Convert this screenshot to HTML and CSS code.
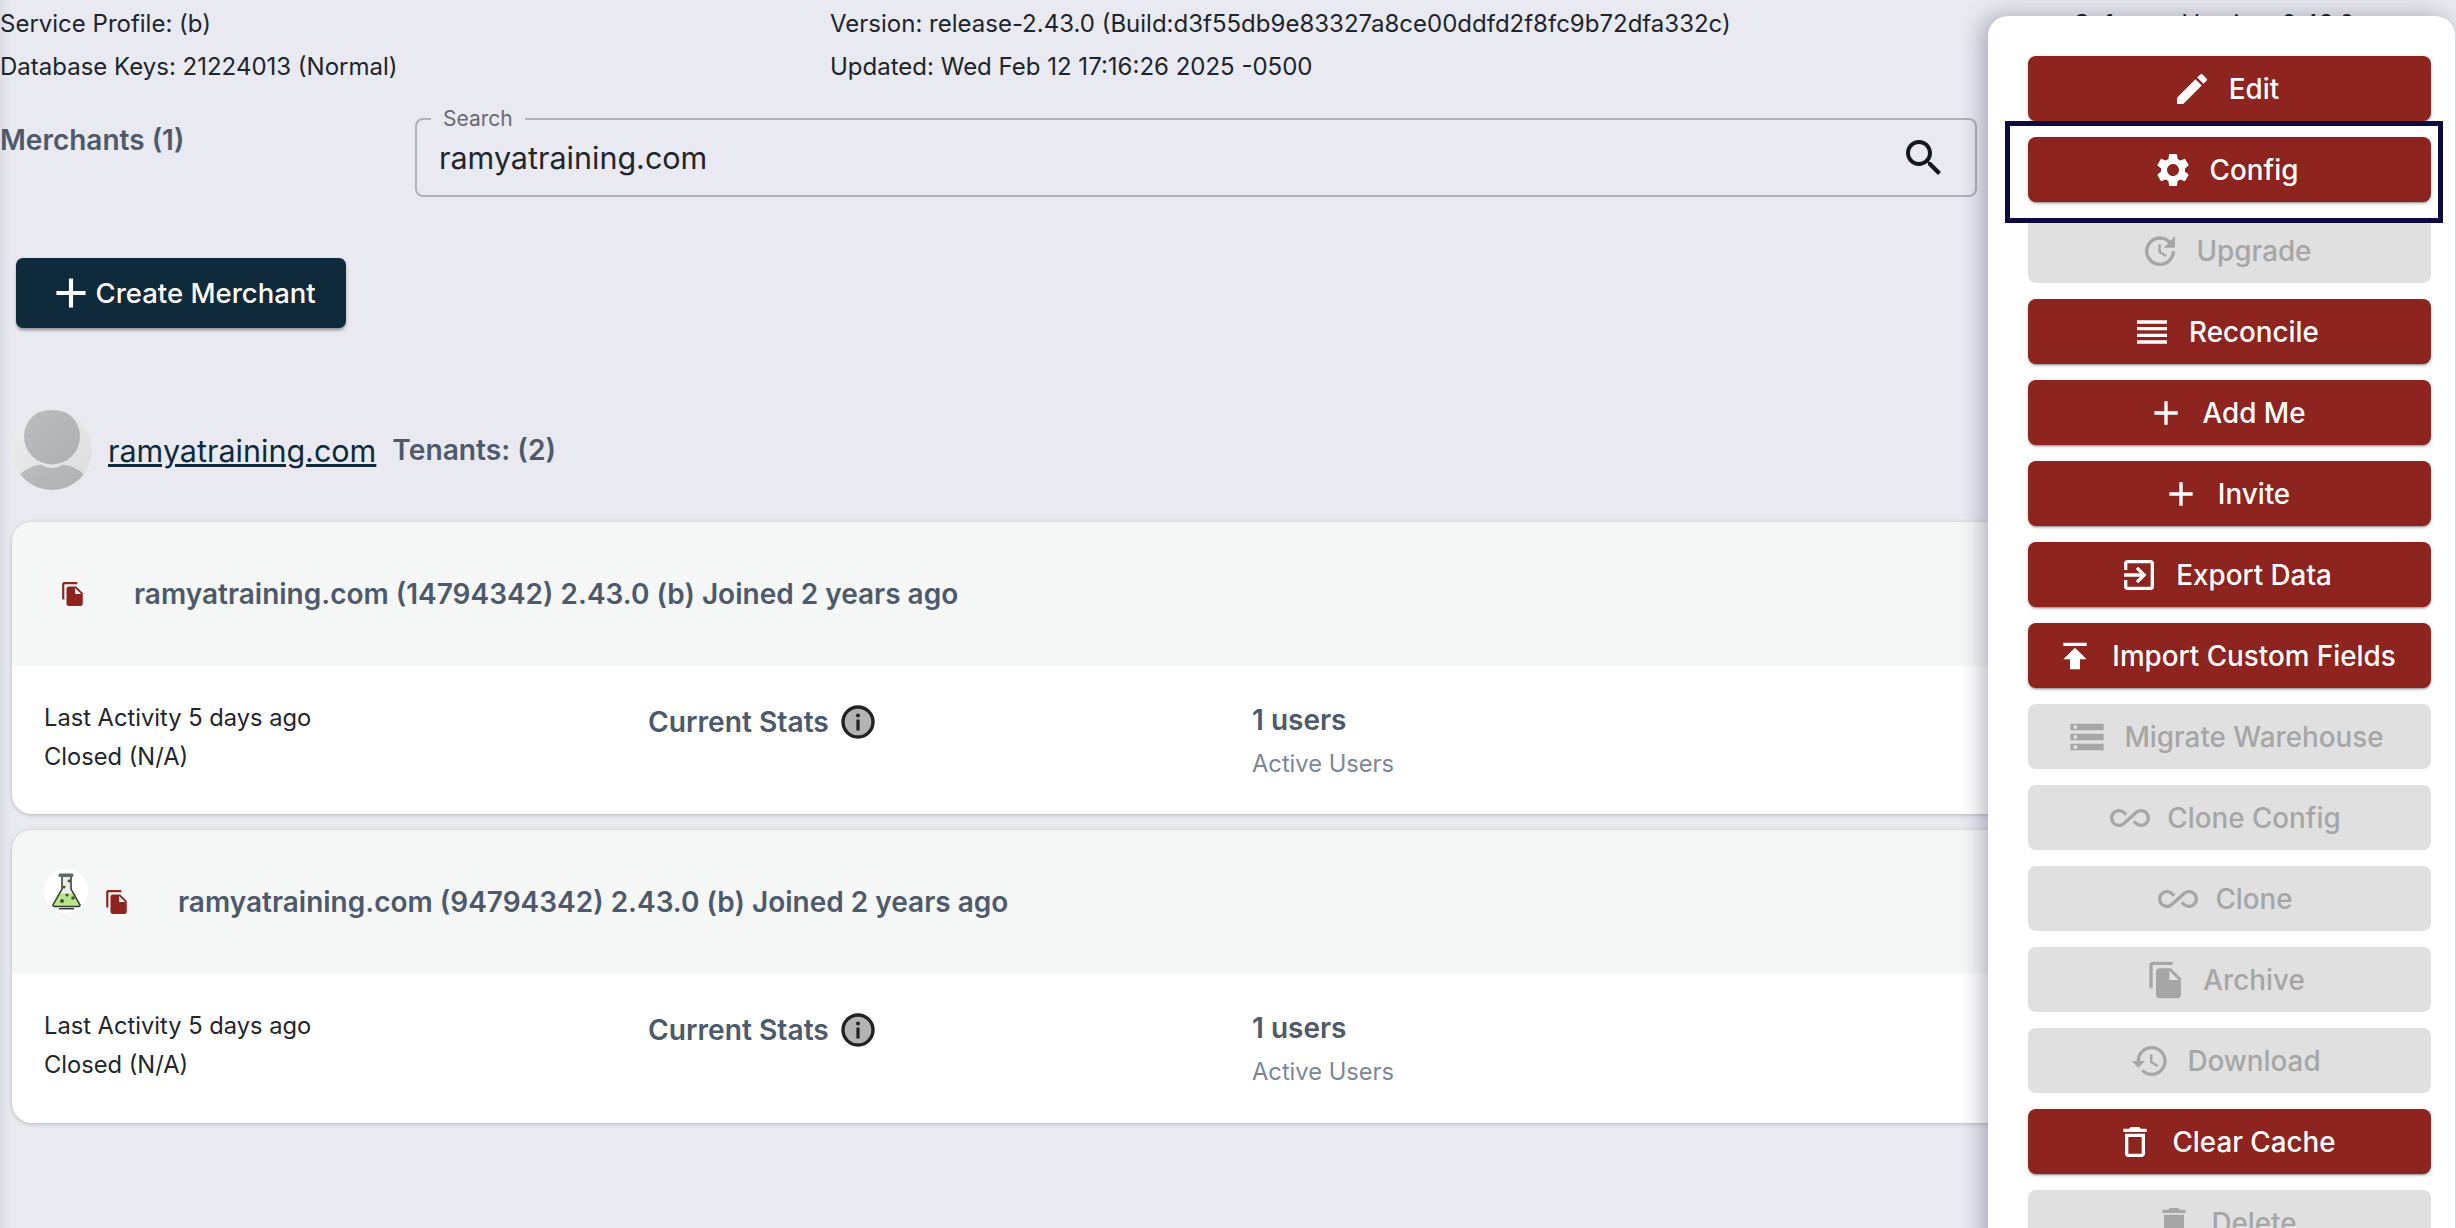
FILE: index.html
```html
<!DOCTYPE html>
<html lang="en">
<head>
<meta charset="utf-8">
<title>Merchants</title>
<link rel="stylesheet" href="styles.css">
</head>
<body>
<svg class="defs" width="0" height="0" aria-hidden="true">
  <symbol id="i-edit" viewBox="0 0 24 24"><path d="M3 17.25V21h3.75L17.81 9.94l-3.75-3.75L3 17.25zM20.71 7.04c.39-.39.39-1.02 0-1.41l-2.34-2.34a.9959.9959 0 0 0-1.41 0l-1.83 1.83 3.75 3.75 1.83-1.83z"/></symbol>
  <symbol id="i-gear" viewBox="0 0 24 24"><path d="M19.14 12.94c.04-.3.06-.61.06-.94 0-.32-.02-.64-.07-.94l2.03-1.58c.18-.14.23-.41.12-.61l-1.92-3.32c-.12-.22-.37-.29-.59-.22l-2.39.96c-.5-.38-1.03-.7-1.62-.94l-.36-2.54c-.04-.24-.24-.41-.48-.41h-3.84c-.24 0-.43.17-.47.41l-.36 2.54c-.59.24-1.13.57-1.62.94l-2.39-.96c-.22-.08-.47 0-.59.22L2.74 8.87c-.12.21-.08.47.12.61l2.03 1.58c-.05.3-.09.63-.09.94s.02.64.07.94l-2.03 1.58c-.18.14-.23.41-.12.61l1.92 3.32c.12.22.37.29.59.22l2.39-.96c.5.38 1.03.7 1.62.94l.36 2.54c.05.24.24.41.48.41h3.84c.24 0 .44-.17.47-.41l.36-2.54c.59-.24 1.13-.56 1.62-.94l2.39.96c.22.08.47 0 .59-.22l1.92-3.32c.12-.22.07-.47-.12-.61l-2.01-1.58zM12 15.6c-1.98 0-3.6-1.62-3.6-3.6s1.62-3.6 3.6-3.6 3.6 1.62 3.6 3.6-1.62 3.6-3.6 3.6z"/></symbol>
  <symbol id="i-update" viewBox="0 0 24 24"><path d="M21 10.12h-6.78l2.74-2.82c-2.73-2.7-7.15-2.8-9.88-.1-2.73 2.71-2.73 7.08 0 9.79s7.15 2.71 9.88 0C18.32 15.65 19 14.08 19 12.1h2c0 1.98-.88 4.55-2.64 6.29-3.51 3.48-9.21 3.48-12.72 0-3.5-3.47-3.53-9.11-.02-12.58s9.14-3.47 12.65 0L21 3v7.12zM12.5 8v4.25l3.5 2.08-.72 1.21L11 13V8h1.5z"/></symbol>
  <symbol id="i-reorder" viewBox="0 0 24 24"><path d="M3 15h18v-2H3v2zm0 4h18v-2H3v2zm0-8h18V9H3v2zm0-6v2h18V5H3z"/></symbol>
  <symbol id="i-add" viewBox="0 0 24 24"><path d="M19 13h-6v6h-2v-6H5v-2h6V5h2v6h6v2z"/></symbol>
  <symbol id="i-exit" viewBox="0 0 24 24"><path d="M10.09 15.59L11.5 17l5-5-5-5-1.41 1.41L12.67 11H3v2h9.67l-2.58 2.59zM19 3H5c-1.11 0-2 .9-2 2v4h2V5h14v14H5v-4H3v4c0 1.1.89 2 2 2h14c1.1 0 2-.9 2-2V5c0-1.1-.9-2-2-2z"/></symbol>
  <symbol id="i-publish" viewBox="0 0 24 24"><path d="M5 4v2h14V4H5zm0 10h4v6h6v-6h4l-7-7-7 7z"/></symbol>
  <symbol id="i-storage" viewBox="0 0 24 24"><path d="M2 20h20v-4H2v4zm2-3h2v2H4v-2zM2 4v4h20V4H2zm4 3H4V5h2v2zm-4 7h20v-4H2v4zm2-3h2v2H4v-2z"/></symbol>
  <symbol id="i-infinity" viewBox="0 0 24 24"><path d="M18.6 6.62c-1.44 0-2.8.56-3.77 1.53L12 10.66 10.48 12h.01L7.8 14.39c-.64.64-1.49.99-2.4.99-1.87 0-3.39-1.51-3.39-3.38S3.53 8.62 5.4 8.62c.91 0 1.76.35 2.44 1.03l1.13 1 1.51-1.34L9.22 8.2C8.2 7.18 6.84 6.62 5.4 6.62 2.42 6.62 0 9.04 0 12s2.42 5.38 5.4 5.38c1.44 0 2.8-.56 3.77-1.53l2.83-2.5.01.01L13.52 12h-.01l2.69-2.39c.64-.64 1.49-.99 2.4-.99 1.87 0 3.39 1.51 3.39 3.38s-1.52 3.38-3.39 3.38c-.9 0-1.76-.35-2.44-1.03l-1.14-1.01-1.51 1.34 1.27 1.12c1.02 1.01 2.37 1.57 3.82 1.57 2.98 0 5.4-2.41 5.4-5.38s-2.42-5.37-5.4-5.37z"/></symbol>
  <symbol id="i-copy" viewBox="0 0 24 24"><path d="M16 1H4c-1.1 0-2 .9-2 2v14h2V3h12V1zm-1 4l6 6v10c0 1.1-.9 2-2 2H7.99C6.89 23 6 22.1 6 21l.01-14c0-1.1.89-2 1.99-2h7zm-1 7h5.5L14 6.5V12z"/></symbol>
  <symbol id="i-history" viewBox="0 0 24 24"><path d="M13 3c-4.97 0-9 4.03-9 9H1l3.89 3.89.07.14L9 12H6c0-3.87 3.13-7 7-7s7 3.13 7 7-3.13 7-7 7c-1.93 0-3.68-.79-4.94-2.06l-1.42 1.42C8.27 19.99 10.51 21 13 21c4.97 0 9-4.03 9-9s-4.03-9-9-9zm-1 5v5l4.28 2.54.72-1.21-3.5-2.08V8H12z"/></symbol>
  <symbol id="i-trash-o" viewBox="0 0 24 24"><path d="M6 19c0 1.1.9 2 2 2h8c1.1 0 2-.9 2-2V7H6v12zM8 9h8v10H8V9zm7.5-5l-1-1h-5l-1 1H5v2h14V4z"/></symbol>
  <symbol id="i-trash" viewBox="0 0 24 24"><path d="M6 19c0 1.1.9 2 2 2h8c1.1 0 2-.9 2-2V7H6v12zM19 4h-3.5l-1-1h-5l-1 1H5v2h14V4z"/></symbol>
  <symbol id="i-search" viewBox="0 0 24 24"><path d="M15.5 14h-.79l-.28-.27C15.41 12.59 16 11.11 16 9.5 16 5.91 13.09 3 9.5 3S3 5.91 3 9.5 5.91 16 9.5 16c1.61 0 3.09-.59 4.23-1.57l.27.28v.79l5 4.99L20.49 19l-4.99-5zm-6 0C7.01 14 5 11.99 5 9.5S7.01 5 9.5 5 14 7.01 14 9.5 11.99 14 9.5 14z"/></symbol>
  <symbol id="i-info" viewBox="0 0 34 34">
    <circle cx="17" cy="17" r="15" fill="#b3b3b3" stroke="#222" stroke-width="3.4"/>
    <circle cx="17" cy="10.5" r="2" fill="#222"/>
    <rect x="15.4" y="14.5" width="3.2" height="11" fill="#222"/>
  </symbol>
</svg>

<main class="page">
  <header class="meta">
    <div class="meta-col meta-a">
      <div>Service Profile: (b)</div>
      <div>Database Keys: 21224013 (Normal)</div>
    </div>
    <div class="meta-col meta-b">
      <div>Version: release-2.43.0 (Build:d3f55db9e83327a8ce00ddfd2f8fc9b72dfa332c)</div>
      <div>Updated: Wed Feb 12 17:16:26 2025 -0500</div>
    </div>
    <div class="meta-col meta-c">
      <div>Software Version: 2.43.0</div>
    </div>
  </header>

  <section class="toolbar">
    <h2 class="count">Merchants (1)</h2>
    <div class="search">
      <span class="search-label">Search</span>
      <span class="search-value">ramyatraining.com</span>
      <svg class="search-icon"><use href="#i-search"/></svg>
    </div>
  </section>

  <button class="create"><svg class="create-icon"><use href="#i-add"/></svg>Create Merchant</button>

  <section class="merchant">
    <svg class="avatar" viewBox="0 0 80 80" aria-hidden="true">
      <defs>
        <linearGradient id="av-bg" x1="0" y1="0" x2="1" y2="1"><stop offset="0" stop-color="#eeeeef"/><stop offset="1" stop-color="#dcdcde"/></linearGradient>
        <linearGradient id="av-fg" x1="0" y1="0" x2="1" y2="1"><stop offset="0" stop-color="#bcbdc0"/><stop offset="1" stop-color="#aeafb2"/></linearGradient>
        <clipPath id="av-clip"><circle cx="40" cy="40" r="40"/></clipPath>
      </defs>
      <circle cx="40" cy="40" r="40" fill="url(#av-bg)"/>
      <g clip-path="url(#av-clip)" fill="url(#av-fg)">
        <circle cx="40" cy="26.5" r="28"/>
        <path d="M6 66 C16 57 26 54 30 55 C36 59 44 59 50 55 C54 54 64 57 74 66 L72 80 L8 80 Z"/>
      </g>
    </svg>
    <a class="merchant-link" href="#">ramyatraining.com</a>
    <span class="tenants">Tenants: (2)</span>
  </section>

  <article class="card">
    <div class="card-head">
      <svg class="doc"><use href="#i-copy"/></svg>
      <span class="card-title">ramyatraining.com (14794342) 2.43.0 (b) Joined 2 years ago</span>
    </div>
    <div class="card-body">
      <div class="activity">
        <div>Last Activity 5 days ago</div>
        <div>Closed (N/A)</div>
      </div>
      <div class="stats">Current Stats <svg class="info"><use href="#i-info"/></svg></div>
      <div class="users">
        <div class="users-num">1 users</div>
        <div class="users-label">Active Users</div>
      </div>
    </div>
  </article>

  <article class="card card-tall">
    <div class="card-head card-head-sandbox">
      <svg class="flask" viewBox="0 0 44 44" aria-hidden="true">
        <circle cx="22" cy="22" r="22" fill="#fff"/>
        <path d="M18 8 V20 L9 36 Q9 37.5 11 37.5 H34 Q36 37.5 36 36 L27 20 V8 Z" fill="#ececec"/>
        <path d="M14 24.5 H31 L35.5 36.5 Q35.5 37.5 34 37.5 H11 Q9.5 37.5 9.5 36 Z" fill="#b9e58a"/>
        <path d="M18 8 V20 L9 36 Q9 37.5 11 37.5 H34 Q36 37.5 36 36 L27 20 V8" fill="none" stroke="#333" stroke-width="1.5"/>
        <rect x="14.5" y="4.5" width="15" height="3.5" rx="1.5" fill="#666"/>
        <rect x="15" y="39" width="15" height="1.4" fill="#333"/>
        <circle cx="20" cy="18" r="1.5" fill="#3c5a20"/><circle cx="25" cy="12" r="1.4" fill="#3c5a20"/>
        <circle cx="23" cy="26" r="1.6" fill="#3c5a20"/><circle cx="29" cy="29" r="1.8" fill="#3c5a20"/><circle cx="18" cy="32" r="2" fill="#3c5a20"/>
      </svg>
      <svg class="doc"><use href="#i-copy"/></svg>
      <span class="card-title">ramyatraining.com (94794342) 2.43.0 (b) Joined 2 years ago</span>
    </div>
    <div class="card-body">
      <div class="activity">
        <div>Last Activity 5 days ago</div>
        <div>Closed (N/A)</div>
      </div>
      <div class="stats">Current Stats <svg class="info"><use href="#i-info"/></svg></div>
      <div class="users">
        <div class="users-num">1 users</div>
        <div class="users-label">Active Users</div>
      </div>
    </div>
  </article>
</main>

<aside class="menu">
  <button class="act"><span class="act-icon"><svg><use href="#i-edit"/></svg></span>Edit</button>
  <button class="act"><span class="act-icon"><svg><use href="#i-gear"/></svg></span>Config</button>
  <button class="act off"><span class="act-icon"><svg><use href="#i-update"/></svg></span>Upgrade</button>
  <button class="act"><span class="act-icon"><svg><use href="#i-reorder"/></svg></span>Reconcile</button>
  <button class="act"><span class="act-icon"><svg><use href="#i-add"/></svg></span>Add Me</button>
  <button class="act"><span class="act-icon"><svg><use href="#i-add"/></svg></span>Invite</button>
  <button class="act"><span class="act-icon"><svg><use href="#i-exit"/></svg></span>Export Data</button>
  <button class="act"><span class="act-icon"><svg><use href="#i-publish"/></svg></span>Import Custom Fields</button>
  <button class="act off"><span class="act-icon"><svg><use href="#i-storage"/></svg></span>Migrate Warehouse</button>
  <button class="act off"><span class="act-icon"><svg><use href="#i-infinity"/></svg></span>Clone Config</button>
  <button class="act off"><span class="act-icon"><svg><use href="#i-infinity"/></svg></span>Clone</button>
  <button class="act off"><span class="act-icon"><svg><use href="#i-copy"/></svg></span>Archive</button>
  <button class="act off"><span class="act-icon"><svg><use href="#i-history"/></svg></span>Download</button>
  <button class="act"><span class="act-icon"><svg><use href="#i-trash-o"/></svg></span>Clear Cache</button>
  <button class="act off"><span class="act-icon"><svg><use href="#i-trash"/></svg></span>Delete</button>
</aside>
<div class="focus-box"></div>
</body>
</html>
```

FILE: styles.css
```css
* { box-sizing: border-box; }

html, body {
  margin: 0;
  height: 100%;
  overflow: hidden;
}

body {
  position: relative;
  background: #e9e9f2;
  color: #1f2328;
  font-family: Inter, "Noto Sans", sans-serif;
}

.defs { position: absolute; }

.page {
  height: 100%;
  padding: 2px 12px 0 0;
  box-shadow: inset 14px 0 10px -10px rgba(0, 0, 0, .07);
}

/* header meta */
.meta {
  display: grid;
  grid-template-columns: 830px 1244px 1fr;
  font-size: 24px;
  line-height: 43px;
  color: #20242a;
}

/* toolbar */
.toolbar {
  display: flex;
  margin-top: 30px;
}

.count {
  width: 415px;
  flex: none;
  margin: 0;
  font-size: 28px;
  font-weight: 600;
  line-height: 44px;
  color: #4e5a69;
}

.search {
  position: relative;
  display: flex;
  align-items: center;
  justify-content: space-between;
  width: 1562px;
  height: 79px;
  padding: 0 27px 0 22px;
  border: 2px solid #b1b1b8;
  border-radius: 8px;
}

.search-label {
  position: absolute;
  left: 14px;
  top: -14px;
  padding: 0 12px;
  background: #e9e9f2;
  font-size: 21px;
  line-height: 26px;
  color: #666b73;
}

.search-value {
  font-size: 30.5px;
  color: #22262b;
}

.search-icon {
  width: 48px;
  height: 48px;
  fill: #15181c;
}

/* create */
.create {
  display: flex;
  align-items: center;
  width: 330px;
  height: 70px;
  margin: 61px 0 0 16px;
  padding: 0 0 0 29.5px;
  border: 0;
  border-radius: 7px;
  background: #0f2a3a;
  box-shadow: 0 3px 3px -1px rgba(0, 0, 0, .3), 0 2px 5px rgba(0, 0, 0, .14);
  color: #fff;
  font: 500 27.5px Inter, sans-serif;
}

.create-icon {
  flex: none;
  width: 50px;
  height: 50px;
  fill: #fff;
}

/* merchant row */
.merchant {
  display: flex;
  align-items: center;
  height: 80px;
  margin: 82px 0 0 12px;
}

.avatar {
  width: 80px;
  height: 80px;
  margin-right: 16px;
}

.merchant-link {
  font-size: 30.5px;
  color: #0f2a3a;
  text-decoration: underline;
}

.tenants {
  margin-left: 16px;
  font-size: 28.2px;
  font-weight: 600;
  color: #4e5a69;
}

/* cards */
.card {
  height: 292px;
  margin: 32px 0 -16px 12px;
  border-radius: 20px;
  background: #fff;
  box-shadow: 0 1px 4px rgba(0, 0, 0, .22);
  overflow: hidden;
}

.card-tall {
  height: 293px;
}

.card-head {
  display: flex;
  align-items: center;
  height: 144px;
  padding-left: 48px;
  background: #f5f7f7;
}

.doc {
  flex: none;
  width: 26px;
  height: 26px;
  margin-right: 48px;
  fill: #8d241f;
}

.card-head-sandbox {
  padding-left: 32px;
}

.flask {
  flex: none;
  width: 44px;
  height: 44px;
  margin: -23px 16px 0 0;
}

.card-title {
  font-size: 28px;
  font-weight: 600;
  color: #4e5a69;
}

.card-body {
  display: grid;
  grid-template-columns: 604px 604px 1fr;
  padding: 32px 0 0 32px;
}

.activity {
  font-size: 23.7px;
  line-height: 39px;
  color: #22262b;
}

.stats {
  display: flex;
  align-items: center;
  gap: 12px;
  height: 48px;
  font-size: 28.2px;
  font-weight: 600;
  color: #4e5a69;
}

.info {
  width: 34px;
  height: 34px;
}

.users-num {
  font-size: 28px;
  font-weight: 600;
  line-height: 44px;
  color: #4e5a69;
}

.users-label {
  margin-top: 4px;
  font-size: 23.7px;
  line-height: 36px;
  color: #7b8794;
}

/* action drawer */
.menu {
  position: absolute;
  top: 16px;
  left: 1988px;
  width: 467px;
  height: 1300px;
  display: flex;
  flex-direction: column;
  gap: 16px;
  padding: 40px 24px 0 40px;
  border-radius: 20px;
  background: #fff;
  box-shadow: -6px 0 22px rgba(20, 20, 40, .3);
}

.act {
  display: flex;
  align-items: center;
  justify-content: center;
  flex: none;
  height: 65px;
  padding: 0 0 0 32px;
  border: 0;
  border-radius: 8px;
  background: #8d241f;
  box-shadow: 0 3px 1px -2px rgba(0, 0, 0, .2), 0 2px 2px rgba(0, 0, 0, .14), 0 1px 5px rgba(0, 0, 0, .12);
  color: #fff;
  font: 500 27.8px Inter, sans-serif;
}

.act-icon {
  display: flex;
  justify-content: flex-end;
  width: 0;
  margin-right: 17px;
  fill: #fff;
}

.act-icon svg {
  flex: none;
  width: 40px;
  height: 40px;
}

.off {
  background: #e0e0e0;
  box-shadow: none;
  color: #a6a6a6;
}

.off .act-icon {
  fill: #a6a6a6;
}

.focus-box {
  position: absolute;
  top: 121px;
  left: 2005px;
  width: 438px;
  height: 102px;
  border: 5px solid #0c0a3e;
}
```
